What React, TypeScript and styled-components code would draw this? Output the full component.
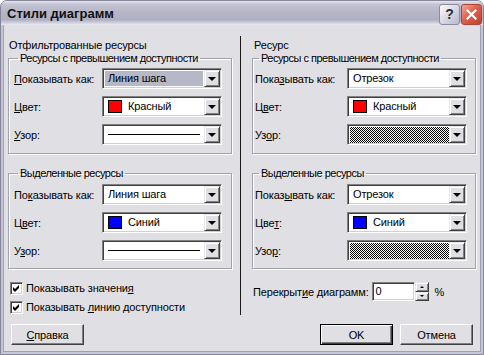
import * as React from 'react';
import styled, { createGlobalStyle, css } from 'styled-components';

const GlobalStyle = createGlobalStyle`
  html, body {
    margin: 0;
    padding: 0;
    background: #ffffff;
  }
  body {
    font-family: "Liberation Sans", Arial, sans-serif;
    font-size: 11px;
    letter-spacing: -0.15px;
    color: #000000;
  }
`;

const Window = styled.div`
  width: 484px;
  height: 355px;
  box-sizing: border-box;
  display: flex;
  flex-direction: column;
  background: #c6c6d4;
  border: 1px solid #85859a;
  border-radius: 7px 7px 0 0;
  overflow: hidden;
`;

const TitleBar = styled.div`
  flex: none;
  height: 24px;
  display: flex;
  align-items: center;
  justify-content: space-between;
  padding: 0 1px 0 6px;
  background: linear-gradient(#eaeaf2 0, #c4c4d4 3px, #b6b6c8 45%, #b0b0c4 78%, #cdcddb 90%, #ececf4 100%);
`;

const Title = styled.span`
  font-family: "Liberation Sans", Arial, sans-serif;
  font-weight: bold;
  font-size: 13px;
  letter-spacing: 0;
  color: #111111;
  padding-top: 1px;
`;

const TitleButtons = styled.div`
  display: flex;
  gap: 1px;
  padding-top: 2px;
`;

const CaptionButton = styled.div<{ $close?: boolean }>`
  width: 21px;
  height: 21px;
  box-sizing: border-box;
  border-radius: 3px;
  display: flex;
  align-items: center;
  justify-content: center;
  font-weight: bold;
  font-size: 14px;
  color: #2a2a3a;
  border: 1px solid #8a8aa0;
  background: linear-gradient(135deg, #fbfbfd 0, #dcdce6 45%, #b8b8c8 100%);
  ${p =>
    p.$close &&
    css`
      border-color: #a8463a;
      background: linear-gradient(135deg, #f4a89a 0, #e0604c 45%, #c24030 100%);
    `}
`;

const Client = styled.div`
  flex: 1;
  display: flex;
  flex-direction: column;
  margin: 0 2px 2px;
  padding: 11px 4px 0;
  border: 1px solid #a0a0b4;
  border-top: none;
  background: #e0dfe3;
`;

const Columns = styled.div`
  height: 279px;
  display: flex;
`;

const Column = styled.div`
  width: 224px;
  display: flex;
  flex-direction: column;
`;

const Separator = styled.div`
  width: 1px;
  margin: 0 11px 0 8px;
  background: #1a1a1a;
`;

const Heading = styled.div<{ $pad: number }>`
  margin-top: 3px;
  line-height: 13px;
  padding-left: ${p => p.$pad}px;
`;

const Group = styled.fieldset<{ $padLeft: number; $top: number; $bottom: number; $gapTop: number }>`
  margin: ${p => p.$gapTop}px 0 0;
  padding: ${p => p.$top}px 8px ${p => p.$bottom}px ${p => p.$padLeft}px;
  border: 1px solid #a2a2aa;
  box-shadow: inset 1px 1px 0 #ffffff, 1px 1px 0 #ffffff;
  display: flex;
  flex-direction: column;
  gap: 7px;
  min-width: 0;
`;

const Legend = styled.legend`
  margin-left: 4px;
  padding: 0 2px;
  line-height: 13px;
  letter-spacing: -0.5px;
`;

const Row = styled.div<{ $labelWidth: number }>`
  display: grid;
  grid-template-columns: ${p => p.$labelWidth}px 120px;
  align-items: center;
  height: 21px;
`;

const Label = styled.span`
  white-space: nowrap;
`;

const Key = styled.span`
  text-decoration: underline;
`;

const Sunken = css`
  box-sizing: border-box;
  border: 1px solid;
  border-color: #808080 #ffffff #ffffff #808080;
  box-shadow: inset 1px 1px 0 #404040, inset -1px -1px 0 #d4d0c8;
  background: #ffffff;
`;

const Raised = css`
  box-sizing: border-box;
  border: 1px solid;
  border-color: #e8e8ec #404040 #404040 #e8e8ec;
  box-shadow: inset 1px 1px 0 #ffffff, inset -1px -1px 0 #808080;
  background: #e0dfe3;
`;

const ComboBox = styled.div`
  ${Sunken};
  height: 21px;
  display: flex;
  padding: 1px;
`;

const Field = styled.div<{ $selected?: boolean; $pattern?: boolean }>`
  flex: 1;
  display: flex;
  align-items: center;
  gap: 6px;
  padding: 0 3px;
  margin: 1px;
  line-height: 13px;
  ${p =>
    p.$selected &&
    css`
      background: #b6b8c7;
    `}
  ${p =>
    p.$pattern &&
    css`
      margin: 1px 0 0 1px;
      background: repeating-conic-gradient(#000000 0 25%, #ffffff 0 50%) 0 0 / 2px 2px;
    `}
`;

const Swatch = styled.span<{ $color: string }>`
  width: 14px;
  height: 13px;
  box-sizing: border-box;
  border: 1px solid #000000;
  background: ${p => p.$color};
  flex: none;
`;

const Line = styled.span`
  flex: 1;
  height: 1px;
  background: #000000;
`;

const DropButton = styled.div`
  ${Raised};
  width: 16px;
  flex: none;
  display: flex;
  align-items: center;
  justify-content: center;
`;

const Arrow = styled.span`
  width: 0;
  height: 0;
  border-left: 4px solid transparent;
  border-right: 4px solid transparent;
  border-top: 4px solid #000000;
`;

const UpArrow = styled.span`
  width: 0;
  height: 0;
  border-left: 2px solid transparent;
  border-right: 2px solid transparent;
  border-bottom: 2px solid #000000;
`;

const DownArrow = styled.span`
  width: 0;
  height: 0;
  border-left: 2px solid transparent;
  border-right: 2px solid transparent;
  border-top: 2px solid #000000;
`;

const Checks = styled.div`
  margin-top: 13px;
  display: flex;
  flex-direction: column;
  gap: 6px;
  padding-left: 2px;
`;

const CheckRow = styled.label`
  display: flex;
  align-items: center;
  gap: 3px;
  height: 13px;
  line-height: 13px;
`;

const CheckBox = styled.span`
  ${Sunken};
  width: 13px;
  height: 13px;
  display: flex;
  align-items: center;
  justify-content: center;
`;

const OverlapRow = styled.div`
  margin-top: 13px;
  display: flex;
  align-items: center;
  height: 19px;
  padding-left: 1px;
`;

const OverlapLabel = styled.span`
  margin-right: 3px;
  white-space: nowrap;
`;

const SpinInput = styled.div`
  ${Sunken};
  width: 43px;
  height: 19px;
  padding: 2px 3px;
  line-height: 13px;
`;

const SpinButtons = styled.div`
  width: 14px;
  height: 19px;
  display: flex;
  flex-direction: column;
`;

const SpinButton = styled.div`
  ${Raised};
  flex: 1;
  display: flex;
  align-items: center;
  justify-content: center;
`;

const Percent = styled.span`
  margin-left: 6px;
`;

const ButtonBar = styled.div`
  margin-top: 9px;
  padding: 0 3px;
  display: flex;
  align-items: center;
  gap: 7px;
`;

const Spacer = styled.div`
  flex: 1;
`;

const PushButton = styled.div<{ $default?: boolean }>`
  ${Raised};
  width: 73px;
  height: 21px;
  display: flex;
  align-items: center;
  justify-content: center;
  border-color: #ffffff #404040 #404040 #ffffff;
  box-shadow: inset -1px -1px 0 #808080;
  ${p =>
    p.$default &&
    css`
      border: 1px solid #000000;
      box-shadow: inset 1px 1px 0 #ffffff, inset -1px -1px 0 #404040, inset -2px -2px 0 #808080;
    `}
`;

type Value =
  | { kind: 'text'; text: string; selected?: boolean }
  | { kind: 'color'; text: string; color: string }
  | { kind: 'line' }
  | { kind: 'pattern' };

interface Setting {
  label: React.ReactNode;
  value: Value;
}

const Combo = ({ value }: { value: Value }) => (
  <ComboBox>
    {value.kind === 'text' && <Field $selected={value.selected}>{value.text}</Field>}
    {value.kind === 'color' && (
      <Field>
        <Swatch $color={value.color} />
        {value.text}
      </Field>
    )}
    {value.kind === 'line' && (
      <Field>
        <Line />
      </Field>
    )}
    {value.kind === 'pattern' && <Field $pattern />}
    <DropButton>
      <Arrow />
    </DropButton>
  </ComboBox>
);

const SettingsGroup = (props: {
  legend: string;
  rows: Setting[];
  padLeft: number;
  labelWidth: number;
  top: number;
  bottom: number;
  gapTop: number;
}) => (
  <Group $padLeft={props.padLeft} $top={props.top} $bottom={props.bottom} $gapTop={props.gapTop}>
    <Legend>{props.legend}</Legend>
    {props.rows.map((r, i) => (
      <Row key={i} $labelWidth={props.labelWidth}>
        <Label>{r.label}</Label>
        <Combo value={r.value} />
      </Row>
    ))}
  </Group>
);

const Check = () => (
  <CheckBox>
    <svg width="7" height="7" viewBox="0 0 7 7">
      <path d="M0 2 L2 4 L6 0 L6 3 L2 7 L0 5 Z" fill="#000000" />
    </svg>
  </CheckBox>
);

const red = '#ff0000';
const blue = '#0000ff';

export default function App() {
  return (
    <>
      <GlobalStyle />
      <Window>
        <TitleBar>
          <Title>Стили диаграмм</Title>
          <TitleButtons>
            <CaptionButton>?</CaptionButton>
            <CaptionButton $close>
              <svg width="11" height="11" viewBox="0 0 11 11">
                <path d="M1.5 1.5 L9.5 9.5 M9.5 1.5 L1.5 9.5" stroke="#ffffff" strokeWidth="2.2" strokeLinecap="square" />
              </svg>
            </CaptionButton>
          </TitleButtons>
        </TitleBar>
        <Client>
          <Columns>
            <Column>
              <Heading $pad={1}>Отфильтрованные ресурсы</Heading>
              <SettingsGroup
                legend="Ресурсы с превышением доступности"
                padLeft={5}
                labelWidth={88}
                top={3}
                bottom={8}
                gapTop={0}
                rows={[
                  { label: <><Key>П</Key>оказывать как:</>, value: { kind: 'text', text: 'Линия шага', selected: true } },
                  { label: <><Key>Ц</Key>вет:</>, value: { kind: 'color', text: 'Красный', color: red } },
                  { label: <><Key>У</Key>зор:</>, value: { kind: 'line' } },
                ]}
              />
              <SettingsGroup
                legend="Выделенные ресурсы"
                padLeft={5}
                labelWidth={88}
                top={4}
                bottom={7}
                gapTop={13}
                rows={[
                  { label: <>По<Key>к</Key>азывать как:</>, value: { kind: 'text', text: 'Линия шага' } },
                  { label: <>Ц<Key>в</Key>ет:</>, value: { kind: 'color', text: 'Синий', color: blue } },
                  { label: <>У<Key>з</Key>ор:</>, value: { kind: 'line' } },
                ]}
              />
              <Checks>
                <CheckRow>
                  <Check />
                  <span>Показывать значени<Key>я</Key></span>
                </CheckRow>
                <CheckRow>
                  <Check />
                  <span>Показывать <Key>л</Key>инию доступности</span>
                </CheckRow>
              </Checks>
            </Column>
            <Separator />
            <Column>
              <Heading $pad={2}>Ресурс</Heading>
              <SettingsGroup
                legend="Ресурсы с превышением доступности"
                padLeft={2}
                labelWidth={92}
                top={3}
                bottom={8}
                gapTop={0}
                rows={[
                  { label: <>Пока<Key>з</Key>ывать как:</>, value: { kind: 'text', text: 'Отрезок' } },
                  { label: <>Ц<Key>в</Key>ет:</>, value: { kind: 'color', text: 'Красный', color: red } },
                  { label: <>Уз<Key>о</Key>р:</>, value: { kind: 'pattern' } },
                ]}
              />
              <SettingsGroup
                legend="Выделенные ресурсы"
                padLeft={2}
                labelWidth={92}
                top={4}
                bottom={7}
                gapTop={13}
                rows={[
                  { label: <>Показ<Key>ы</Key>вать как:</>, value: { kind: 'text', text: 'Отрезок' } },
                  { label: <>Цве<Key>т</Key>:</>, value: { kind: 'color', text: 'Синий', color: blue } },
                  { label: <>Узо<Key>р</Key>:</>, value: { kind: 'pattern' } },
                ]}
              />
              <OverlapRow>
                <OverlapLabel>Перекрыт<Key>и</Key>е диаграмм:</OverlapLabel>
                <SpinInput>0</SpinInput>
                <SpinButtons>
                  <SpinButton>
                    <UpArrow />
                  </SpinButton>
                  <SpinButton>
                    <DownArrow />
                  </SpinButton>
                </SpinButtons>
                <Percent>%</Percent>
              </OverlapRow>
            </Column>
          </Columns>
          <ButtonBar>
            <PushButton>
              <span><Key>С</Key>правка</span>
            </PushButton>
            <Spacer />
            <PushButton $default>OK</PushButton>
            <PushButton>Отмена</PushButton>
          </ButtonBar>
        </Client>
      </Window>
    </>
  );
}
